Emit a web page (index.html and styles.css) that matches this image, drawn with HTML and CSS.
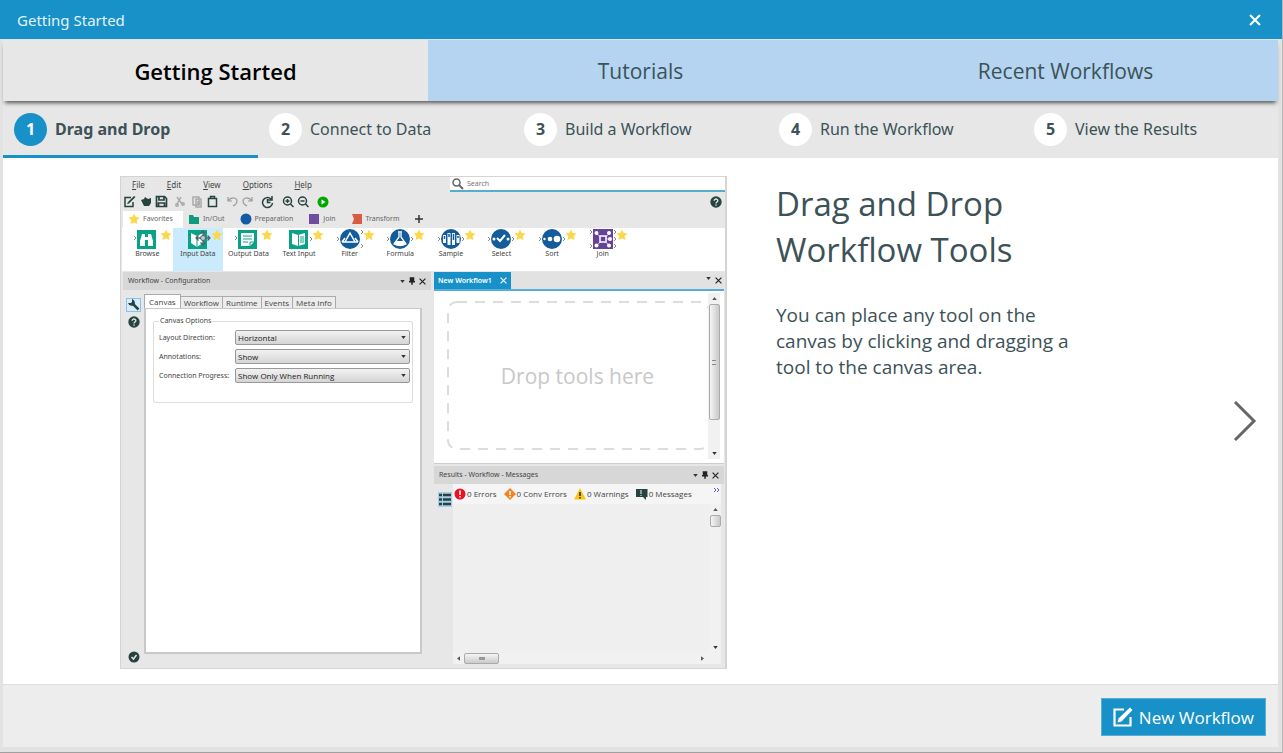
FILE: index.html
```html
<!DOCTYPE html>
<html lang="en">
<head>
<meta charset="utf-8">
<title>Getting Started</title>
<link rel="stylesheet" href="styles.css">
</head>
<body>
<svg class="symbols" aria-hidden="true">
  <symbol id="star" viewBox="0 0 12 12"><path d="M6 .5l1.7 3.6 3.9.5-2.9 2.7.8 4L6 9.3l-3.5 2 .8-4L.4 4.6l3.9-.5z" fill="#fdd74a"/></symbol>
  <symbol id="down" viewBox="0 0 6 4"><path d="M0 0h6L3 4z" fill="#333"/></symbol>
  <symbol id="up" viewBox="0 0 6 4"><path d="M0 4h6L3 0z" fill="#555"/></symbol>
  <symbol id="left" viewBox="0 0 4 6"><path d="M4 0v6L0 3z" fill="#555"/></symbol>
  <symbol id="right" viewBox="0 0 4 6"><path d="M0 0v6l4-3z" fill="#555"/></symbol>
  <symbol id="close" viewBox="0 0 12 12"><path d="M1 1l10 10M11 1L1 11" fill="none" stroke="currentColor" stroke-width="2"/></symbol>
  <symbol id="pin" viewBox="0 0 8 10"><path d="M1 0h6v5h1v2H0V5h1zM3 6h2v4H3z" fill="#222"/></symbol>
  <symbol id="compose" viewBox="0 0 20 20"><path d="M11 2.500H1.500v16h16V10" fill="none" stroke="currentColor" stroke-width="2.200"/><path d="M4.500 15.500l1-4L17 .5 19.500 3 8.500 14.500z" fill="currentColor"/></symbol>
  <symbol id="help" viewBox="0 0 12 12"><circle cx="6" cy="6" r="5.700" fill="#27433f"/><path d="M4.200 4.700C4.200 2.500 7.900 2.500 7.800 4.800 7.800 6 6 6 6 7.400M6 8.500v1.200" fill="none" stroke="#dfe5e4" stroke-width="1.400"/></symbol>
</svg>
<div class="dialog">
  <header class="titlebar">
    <span>Getting Started</span>
    <button class="titlebar-close" aria-label="Close"><svg width="12" height="12"><use href="#close"/></svg></button>
  </header>
  <div class="frame">
    <nav class="tabs" aria-label="Sections">
      <button class="tab tab-active">Getting Started</button>
      <button class="tab">Tutorials</button>
      <button class="tab">Recent Workflows</button>
    </nav>
    <nav class="steps" aria-label="Steps">
      <button class="step step-active"><span class="step-number">1</span>Drag and Drop</button>
      <button class="step"><span class="step-number">2</span>Connect to Data</button>
      <button class="step"><span class="step-number">3</span>Build a Workflow</button>
      <button class="step"><span class="step-number">4</span>Run the Workflow</button>
      <button class="step"><span class="step-number">5</span>View the Results</button>
    </nav>
    <main class="content">
      <section class="app" aria-label="Designer window">
        <div class="app-top">
          <div class="app-tools">
            <div class="menu"><a href="#file"><u>F</u>ile</a><a href="#edit"><u>E</u>dit</a><a href="#view"><u>V</u>iew</a><a href="#options"><u>O</u>ptions</a><a href="#help-menu"><u>H</u>elp</a></div>
            <svg class="toolbar" viewBox="0 0 210 14" fill="none" stroke="#27433f" stroke-width="1.500">
              <g><path d="M8 2.500H2v9h8V7"/><path d="M4 9l1-2 6-6 1.500 1-6.500 6.500z" fill="#27433f" stroke="none"/></g>
              <path d="M18 5l3-1 1-2 3 2 3-1v5l-2 3h-5z" fill="#27433f" stroke="none"/>
              <path d="M33.500 1.500h8l2 2v8h-10zM36 2v3h5V2M35.500 12V8h6v4" stroke-width="1.700"/>
              <g stroke="#aaa"><path d="M54 2l5 7M58 2l-4 7"/><circle cx="54" cy="10" r="1.200"/><circle cx="60" cy="9" r="1.200"/><path d="M70 2h6v8h-6zM73 4h5v8h-5zM74 7h3M74 9h3"/></g>
              <path d="M85.500 3.500h8v8h-8zM87.500 3.500v-2h4v2"/>
              <g stroke="#999" stroke-width="1.200"><path d="M105 2v4h4M105 6c4-5 9-3 9 0 0 3-2 4-4 5M129 2v4h-4M129 6c-4-5-9-3-9 0 0 3 2 4 4 5"/></g>
              <path d="M148 4a5 5 0 1 0 1.500 4M149 1v4h-4M144.500 4v3.500h3"/>
              <circle cx="164.500" cy="6" r="4"/><path d="M167.500 9l3 3M162.500 6h4M164.500 4v4"/>
              <circle cx="179.500" cy="6" r="4"/><path d="M182.500 9l3 3M177.500 6h4"/>
              <circle cx="200" cy="7" r="5.500" fill="#00a800" stroke="none"/><path d="M198.500 4.500l4 2.500-4 2.500z" fill="#fff" stroke="none"/>
            </svg>
          </div>
          <div class="app-search-side">
            <label class="search"><svg width="12" height="12" viewBox="0 0 12 12"><circle cx="4.500" cy="4.500" r="3.500" fill="none" stroke="#666" stroke-width="1.500"/><path d="M7 7l4 4" stroke="#666" stroke-width="2"/></svg><input aria-label="Search" placeholder="Search"></label>
            <svg class="app-help" width="12" height="12"><use href="#help"/></svg>
          </div>
        </div>
        <div class="categories">
          <button class="category category-active"><svg width="12" height="12"><use href="#star"/></svg>Favorites</button>
          <button class="category"><svg width="12" height="12" viewBox="0 0 12 12"><path d="M1 2h4l1 2h5v7H1z" fill="#109b7f"/></svg>In/Out</button>
          <button class="category"><svg width="12" height="12" viewBox="0 0 12 12"><circle cx="6" cy="6" r="5.500" fill="#135ca5"/></svg>Preparation</button>
          <button class="category"><svg width="12" height="12" viewBox="0 0 12 12"><path d="M1 1h10v10H1z" fill="#6f4ca0"/></svg>Join</button>
          <button class="category"><svg width="12" height="12" viewBox="0 0 12 12"><path d="M1 1h10v10H1l2-5z" fill="#d95b43"/></svg>Transform</button>
          <button class="category" aria-label="Add"><svg width="8" height="8" viewBox="0 0 8 8"><path d="M4 0v8M0 4h8" stroke="#333" stroke-width="1.500"/></svg></button>
        </div>
        <div class="palette">
          <div class="tool"><span class="tool-art"><svg viewBox="0 0 26 20"><path d="M0 7l2 2-2 2" class="anchor"/><path d="M3 1h19v19H3z" fill="#0aa287"/><path d="M6 17v-5l2-7h3v3h3V5h3l2 7v5h-5v-6h-3v6z" fill="#fff"/></svg><svg class="tool-star"><use href="#star"/></svg></span>Browse</div>
          <div class="tool tool-hover"><span class="tool-art"><svg viewBox="0 0 26 20"><path d="M3 1h19v19H3z" fill="#0aa287"/><path d="M6 4l6 3 6-3v10l-6 4-6-4z" fill="#fff"/><path d="M12 7v11" stroke="#0aa287"/><path d="M18 2v14M11 9h14M15.500 4.500L18 2l2.500 2.500M15.500 13.500L18 16l2.500-2.500M13.500 6.500L11 9l2.500 2.500M22.500 6.500L25 9l-2.500 2.500" fill="none" stroke="#4c6769" stroke-width="1.300"/><circle cx="18" cy="9" r="2.500" fill="#b7cdd1" stroke="#4c6769"/></svg><svg class="tool-star"><use href="#star"/></svg></span>Input Data</div>
          <div class="tool"><span class="tool-art"><svg viewBox="0 0 26 20"><path d="M0 7l2 2-2 2" class="anchor"/><path d="M3 1h19v19H3z" fill="#0aa287"/><path d="M6 4h13v9l-4 4H6z" fill="#fff"/><path d="M8 7h9M8 10h9M8 13h5M15 17v-4h4" fill="none" stroke="#0aa287"/></svg><svg class="tool-star"><use href="#star"/></svg></span>Output Data</div>
          <div class="tool"><span class="tool-art"><svg viewBox="0 0 26 20"><path d="M3 1h19v19H3z" fill="#0aa287"/><path d="M6 4l6 2 7-2v11l-7 2-6-2z" fill="#fff"/><path d="M12.500 6v11M15 7v7M17 7v7" stroke="#0aa287"/><path d="M24 8l2 2-2 2" class="anchor"/></svg><svg class="tool-star"><use href="#star"/></svg></span>Text Input</div>
          <div class="tool"><span class="tool-art"><svg viewBox="0 0 26 20"><path d="M0 8l2 2-2 2M24 1l2 2-2 2M24 15l2 2-2 2" class="anchor"/><circle cx="13" cy="10" r="10" fill="#135c9c"/><path d="M13 4l5 9H8zM5 13h16M8 9l-3 4M18 9l3 4" fill="none" stroke="#fff" stroke-width="1.500"/></svg><svg class="tool-star"><use href="#star"/></svg></span>Filter</div>
          <div class="tool"><span class="tool-art"><svg viewBox="0 0 26 20"><path d="M0 8l2 2-2 2M24 8l2 2-2 2" class="anchor"/><circle cx="13" cy="10" r="10" fill="#135c9c"/><path d="M11 3h4M12 4v4l-5 7q6 3 12 0l-5-7V4" fill="none" stroke="#fff" stroke-width="1.300"/><path d="M9 12h8l2 3q-6 3-12 0z" fill="#fff"/></svg><svg class="tool-star"><use href="#star"/></svg></span>Formula</div>
          <div class="tool"><span class="tool-art"><svg viewBox="0 0 26 20"><path d="M0 8l2 2-2 2M24 8l2 2-2 2" class="anchor"/><circle cx="13" cy="10" r="10" fill="#135c9c"/><path d="M6.500 6v8M11 4v12M15.500 4v12M20 6v8" stroke="#fff" stroke-width="3"/><path d="M6.500 7v3M11 5v3M15.500 5v6M20 7v2" stroke="#135c9c" stroke-width="1.500"/></svg><svg class="tool-star"><use href="#star"/></svg></span>Sample</div>
          <div class="tool"><span class="tool-art"><svg viewBox="0 0 26 20"><path d="M0 8l2 2-2 2M24 8l2 2-2 2" class="anchor"/><circle cx="13" cy="10" r="10" fill="#135c9c"/><circle cx="6" cy="10" r="1.500" fill="#fff"/><circle cx="20" cy="10" r="1.500" fill="#fff"/><path d="M9 9l3 3 5-6" fill="none" stroke="#fff" stroke-width="2"/></svg><svg class="tool-star"><use href="#star"/></svg></span>Select</div>
          <div class="tool"><span class="tool-art"><svg viewBox="0 0 26 20"><path d="M0 8l2 2-2 2M24 8l2 2-2 2" class="anchor"/><circle cx="13" cy="10" r="10" fill="#135c9c"/><circle cx="5.500" cy="10" r="1.200" fill="#fff"/><circle cx="11" cy="10" r="2.300" fill="#fff"/><circle cx="18" cy="10" r="3.300" fill="#fff"/></svg><svg class="tool-star"><use href="#star"/></svg></span>Sort</div>
          <div class="tool"><span class="tool-art"><svg viewBox="0 0 26 20"><path d="M0 1l2 2-2 2M0 15l2 2-2 2M24 1l2 2-2 2M24 8l2 2-2 2M24 15l2 2-2 2" class="anchor"/><path d="M3 0h20v20H3z" fill="#65439b"/><path d="M6 4l14 13M20 4L6 17M13 10h7" stroke="#c9bbdd" stroke-width="1"/><g fill="#fff"><circle cx="6.500" cy="4" r="2"/><circle cx="19" cy="4" r="2"/><circle cx="6.500" cy="16.500" r="2"/><circle cx="19" cy="16.500" r="2"/><circle cx="20" cy="10" r="2"/></g><path d="M10 7h6v6h-6z" fill="#65439b" stroke="#fff" stroke-width="1.500"/></svg><svg class="tool-star"><use href="#star"/></svg></span>Join</div>
        </div>
        <div class="workspace">
          <div class="config">
            <div class="pane-header"><span>Workflow - Configuration</span><span class="pane-actions"><svg width="5" height="3"><use href="#down"/></svg><svg width="6" height="8"><use href="#pin"/></svg><svg width="7" height="7"><use href="#close"/></svg></span></div>
            <div class="config-body">
              <div class="rail">
                <span class="rail-selected"><svg width="12" height="12" viewBox="0 0 12 12"><path d="M4 4l6.500 6.500" stroke="#27433f" stroke-width="2.500"/><path d="M4 0v3L3 4H0q1 3.500 5 2.500l2-2Q7 1 4 0z" fill="#27433f"/></svg></span>
                <svg width="12" height="12"><use href="#help"/></svg>
                <svg class="rail-status" width="12" height="12" viewBox="0 0 12 12"><circle cx="6" cy="6" r="5.500" fill="#27433f"/><path d="M3.500 6l2 2 3-4" fill="none" stroke="#dfe5e4" stroke-width="1.500"/></svg>
              </div>
              <div class="config-main">
                <div class="config-tabs"><button class="config-tab config-tab-active">Canvas</button><button class="config-tab">Workflow</button><button class="config-tab">Runtime</button><button class="config-tab">Events</button><button class="config-tab">Meta Info</button></div>
                <div class="config-sheet">
                  <fieldset class="options">
                    <legend>Canvas Options</legend>
                    <label for="direction">Layout Direction:</label><span class="picker"><select id="direction"><option>Horizontal</option></select><svg><use href="#down"/></svg></span>
                    <label for="annotations">Annotations:</label><span class="picker"><select id="annotations"><option>Show</option></select><svg><use href="#down"/></svg></span>
                    <label for="progress">Connection Progress:</label><span class="picker"><select id="progress"><option>Show Only When Running</option></select><svg><use href="#down"/></svg></span>
                  </fieldset>
                </div>
              </div>
            </div>
          </div>
          <div class="right">
            <div class="document">
              <div class="document-tabs"><button class="document-tab">New Workflow1<svg width="7" height="7"><use href="#close"/></svg></button><span class="pane-actions"><svg class="raised" width="5" height="3"><use href="#down"/></svg><svg width="7" height="7"><use href="#close"/></svg></span></div>
              <div class="canvas">
                <div class="drop-area"><svg class="drop-outline"><rect x="1" y="1" width="100%" height="98%" rx="9"/></svg><span>Drop tools here</span></div>
                <div class="vscroll"><svg width="5" height="3"><use href="#up"/></svg><span class="vthumb vthumb-long"><i></i></span><svg class="track-end" width="5" height="3"><use href="#down"/></svg></div>
              </div>
            </div>
            <div class="results">
              <div class="pane-header"><span>Results - Workflow - Messages</span><span class="pane-actions"><svg width="5" height="3"><use href="#down"/></svg><svg width="6" height="8"><use href="#pin"/></svg><svg width="7" height="7"><use href="#close"/></svg></span></div>
              <div class="results-body">
                <div class="results-rail"><svg width="14" height="15" viewBox="0 0 14 15"><path d="M0 0h14v15H0z" fill="#a9cde9"/><path d="M1 3h3M1 7.500h3M1 12h3M5 3h8M5 7.500h8M5 12h8" stroke="#27433f" stroke-width="2.500"/></svg></div>
                <div class="results-main">
                  <div class="messages">
                    <span><svg width="12" height="12" viewBox="0 0 12 12"><circle cx="6" cy="6" r="5.500" fill="#ee1020"/><path d="M6 2.500v4.500M6 8v1.500" stroke="#fff" stroke-width="1.600"/></svg>0 Errors</span>
                    <span><svg width="12" height="12" viewBox="0 0 12 12"><path d="M6 0l6 6-6 6-6-6z" fill="#f58220"/><path d="M6 3v4M6 8v1.500" stroke="#fff" stroke-width="1.500"/></svg>0 Conv Errors</span>
                    <span><svg width="12" height="12" viewBox="0 0 12 12"><path d="M6 0l6 11.500H0z" fill="#f9c80e"/><path d="M6 4v4M6 9v1.500" stroke="#222" stroke-width="1.500"/></svg>0 Warnings</span>
                    <span><svg width="12" height="12" viewBox="0 0 12 12"><path d="M0 1h11.500v8H10v3L7 9H0z" fill="#27433f"/><path d="M5 2v4M5 7v1" stroke="#b8d6c8" stroke-width="1.300"/></svg>0 Messages</span>
                    <svg class="more" width="6" height="4" viewBox="0 0 6 4"><path d="M0 0l2 2-2 2M3 0l2 2-2 2" fill="none" stroke="#5960b8"/></svg>
                  </div>
                  <div class="log"><div class="log-area"></div><div class="vscroll"><svg width="5" height="3"><use href="#up"/></svg><span class="vthumb vthumb-short"></span><svg class="track-end" width="5" height="3"><use href="#down"/></svg></div></div>
                  <div class="hscroll"><svg width="3" height="5"><use href="#left"/></svg><span class="hthumb"><i></i></span><svg class="hscroll-end" width="3" height="5"><use href="#right"/></svg></div>
                </div>
              </div>
            </div>
          </div>
        </div>
      </section>
      <article class="lesson">
        <h1>Drag and Drop Workflow Tools</h1>
        <p>You can place any tool on the canvas by clicking and dragging a tool to the canvas area.</p>
      </article>
      <button class="next" aria-label="Next"><svg width="24" height="42" viewBox="0 0 24 42"><path d="M2 2l19 19L2 40" fill="none" stroke="#666" stroke-width="3"/></svg></button>
    </main>
    <footer class="footer"><button class="new-workflow"><svg width="20" height="20"><use href="#compose"/></svg>New Workflow</button></footer>
  </div>
</div>
</body>
</html>
```

FILE: styles.css
```css
* { box-sizing: border-box; }
body { margin: 0; font-family: "Open Sans", "Noto Sans", sans-serif; color: #3c5257; }
button { margin: 0; padding: 0; border: 0; background: none; font: inherit; color: inherit; }
svg { display: block; flex: none; }
.symbols { position: absolute; width: 0; height: 0; }

.dialog { display: flex; flex-direction: column; min-height: 100vh; background: #e2e2e2; border-right: 1px solid #b9b9b9; border-bottom: 1px solid #a0a0a0; }
.titlebar { display: flex; align-items: center; justify-content: space-between; height: 39px; padding: 0 21px 0 17px; background: #1791c7; color: #e3f3fa; font-family: "Noto Sans", sans-serif; font-size: 15px; }
.titlebar-close { color: #fff; }
.frame { flex: 1; display: flex; flex-direction: column; margin: 1px 4px 5px 3px; background: #fff; }

.tabs { display: grid; grid-template-columns: repeat(3, 1fr); height: 61px; position: relative; box-shadow: 0 4px 4px -2px #555; }
.tab { background: #b4d4f1; font-size: 21px; }
.tab-active { background: #e7e7e7; color: #000; font-size: 22px; font-weight: 600; }
.steps { display: grid; grid-template-columns: repeat(5, 1fr); height: 57px; background: #e7e7e7; font-family: "Noto Sans", sans-serif; }
.step { display: flex; align-items: center; gap: 8px; padding: 2px 0 0 11px; font-size: 16px; border-bottom: 3px solid transparent; }
.step-active { font-weight: 700; border-color: #1791c7; }
.step-number { display: grid; place-items: center; width: 33px; height: 33px; border-radius: 50%; background: #fff; font-weight: 700; }
.step-active .step-number { background: #1791c7; color: #fff; }

.content { flex: 1; display: flex; padding: 18px 21px 15px 117px; }
.lesson { flex: 1; padding: 5px 0 0 49px; }
.lesson h1 { max-width: 270px; margin: 0; font-size: 33px; line-height: 46px; font-weight: 400; }
.lesson p { max-width: 310px; margin: 29px 0 0; font-size: 19px; line-height: 26px; }
.next { align-self: center; padding-bottom: 4px; }
.footer { display: flex; justify-content: flex-end; height: 63px; padding: 13px 12px 0 0; border-top: 1px solid #ddd; background: #ededed; }
.new-workflow { display: flex; align-items: center; gap: 6px; height: 38px; padding: 0 11px; background: #1791c7; border: 1px solid #5aaed5; color: #fff; font-size: 17px; }

.app { display: flex; flex-direction: column; width: 607px; border: 1px solid #d4d4d4; border-width: 1px 2px 1px 1px; background: #e7e7e7; color: #444; font-family: "Noto Sans", sans-serif; font-size: 7px; line-height: 10px; }
.app-top { display: flex; height: 34px; }
.app-tools { width: 329px; }
.menu { display: flex; gap: 22px; padding: 3px 0 0 11px; font-size: 8px; height: 18px; }
.menu a { color: inherit; text-decoration: none; }
.toolbar { width: 210px; height: 14px; margin-left: 2px; }
.app-search-side { flex: 1; display: flex; flex-direction: column; align-items: flex-end; gap: 4px; }
.search { display: flex; align-items: center; gap: 3px; width: 100%; height: 15px; padding-left: 2px; background: #fff; border-bottom: 2px solid #55aecb; }
.search input { flex: 1; border: 0; padding: 0; font: inherit; outline: 0; }
.search input::placeholder { color: #777; }
.app-help { margin-right: 3px; }
.categories { display: flex; height: 17px; color: #666; }
.category { display: flex; align-items: center; gap: 3px; padding: 0 10px 2px 5px; }
.category-active { background: #fff; margin-left: 2px; }
.palette { display: grid; grid-template-columns: repeat(10, 1fr); height: 43px; margin-left: 1px; padding-right: 97px; background: #fff; }
.tool { display: flex; flex-direction: column; align-items: center; padding-top: 1px; white-space: nowrap; }
.tool-hover { background: #c9ebfb; }
.tool-art { position: relative; width: 26px; height: 20px; }
.tool-star { position: absolute; left: 26px; top: 0; width: 12px; height: 12px; }
.anchor { fill: none; stroke: #888; }

.workspace { flex: 1; display: flex; gap: 3px; padding: 1px 0 4px 2px; }
.config { display: flex; flex-direction: column; width: 308px; }
.pane-header { display: flex; align-items: center; justify-content: space-between; height: 18px; padding: 0 5px; background: #d7d7d7; }
.pane-actions { display: flex; align-items: center; gap: 4px; color: #222; }
.config-body { flex: 1; display: flex; }
.rail { display: flex; flex-direction: column; align-items: center; gap: 4px; width: 21px; padding: 8px 0 1px; }
.rail-selected { display: grid; place-items: center; width: 15px; height: 14px; background: #d7ecfb; border: 1px solid #8cc1e8; }
.rail-status { margin-top: auto; }
.config-main { flex: 1; display: flex; flex-direction: column; padding: 4px 9px 10px 0; }
.config-tabs { display: flex; align-items: flex-end; height: 14px; font-family: "Open Sans", sans-serif; font-size: 8px; }
.config-tab { height: 12px; padding: 0 3px; border: 1px solid #aaa; border-left-width: 0; border-bottom: 0; background: #ececec; white-space: nowrap; }
.config-tab-active { height: 14px; padding: 0 4px; border-left-width: 1px; background: #fff; }
.config-sheet { flex: 1; padding: 7px 7px; background: #fff; border: 2px solid #c9c9c9; border-top-width: 1px; }
.options { display: grid; grid-template-columns: 76px 1fr; align-items: center; align-content: start; row-gap: 4px; height: 87px; margin: 0; padding: 4px 2px 0 5px; border: 1px solid #ddd; border-radius: 2px; white-space: nowrap; }
.options legend { padding: 0 1px; }
.picker { position: relative; display: block; }
.picker select { display: block; width: 100%; height: 15px; padding: 0 2px; appearance: none; border: 1px solid #999; border-radius: 2px; background: linear-gradient(#f2f2f2, #d5d5d5); font-family: "Open Sans", sans-serif; font-size: 8px; color: #222; }
.picker svg { position: absolute; right: 4px; top: 6px; width: 5px; height: 3px; }

.right { flex: 1; display: flex; flex-direction: column; gap: 2px; padding-right: 1px; }
.document { display: flex; flex-direction: column; height: 192px; background: #fff; border-bottom: 1px solid #ccc; }
.document-tabs { display: flex; justify-content: space-between; height: 19px; padding-right: 2px; background: #e2e2e2; border-bottom: 2px solid #55aeda; }
.document-tab { display: flex; align-items: center; gap: 8px; padding: 0 4px 0 4px; background: #1791c7; color: #fff; font-weight: 600; }
.raised { margin-bottom: 5px; }
.canvas { flex: 1; display: flex; padding: 2px 4px 4px 13px; }
.drop-area { flex: 1; display: grid; place-items: center; position: relative; margin: 8px 0 8px; color: #c8c8c8; font-family: "Open Sans", sans-serif; font-size: 21px; }
.drop-outline { position: absolute; inset: 0; width: 100%; height: 100%; }
.drop-outline rect { fill: none; stroke: #dcdcdc; stroke-width: 2; stroke-dasharray: 10 8; }
.vscroll { display: flex; flex-direction: column; align-items: center; width: 12px; padding: 4px 0; background: #f1f1f1; gap: 4px; }
.vthumb { display: grid; place-items: center; width: 11px; border: 1px solid #aaa; border-radius: 2px; background: linear-gradient(90deg, #f5f5f5, #c9c9c9); }
.vthumb-long { height: 116px; }
.vthumb-short { height: 12px; }
.vthumb i { width: 4px; height: 5px; border: 1px solid #888; border-width: 1px 0; }
.track-end { margin-top: auto; }
.results { flex: 1; display: flex; flex-direction: column; }
.results-body { flex: 1; display: flex; }
.results-rail { width: 19px; padding: 8px 0 0 4px; }
.results-main { flex: 1; display: flex; flex-direction: column; padding-right: 3px; }
.messages { display: flex; height: 20px; padding: 0 1px; gap: 7px; background: #f5f5f5; font-family: "Open Sans", sans-serif; font-size: 8px; }
.messages span { display: flex; align-items: center; gap: 1px; white-space: nowrap; }
.more { margin: 4px 0 0 auto; }
.log { flex: 1; display: flex; }
.log-area { flex: 1; background: #efefef; }
.hscroll { display: flex; align-items: center; height: 11px; padding: 0 17px 0 4px; gap: 4px; background: #f1f1f1; }
.hthumb { display: grid; place-items: center; width: 35px; height: 11px; border: 1px solid #aaa; border-radius: 2px; background: linear-gradient(#f5f5f5, #cacaca); }
.hthumb i { width: 6px; height: 3px; background: #999; }
.hscroll-end { margin-left: auto; }
```
